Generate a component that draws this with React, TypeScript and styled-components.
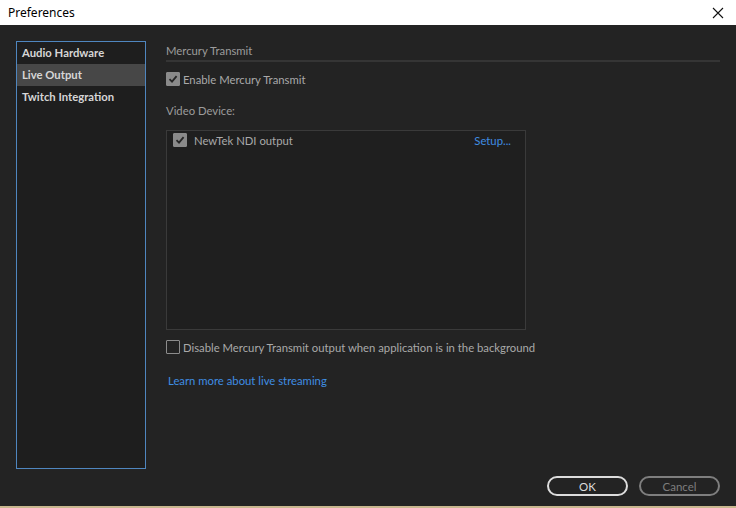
import styled, { createGlobalStyle } from "styled-components";

const GlobalStyle = createGlobalStyle`
  html, body {
    margin: 0;
    padding: 0;
    background: #232323;
  }
  body {
    font-family: Lato, "Noto Sans", sans-serif;
    font-size: 11.3px;
  }
`

const Window = styled.div`
  width: 736px;
  height: 508px;
  display: flex;
  flex-direction: column;
  background: #232323;
  box-sizing: border-box;
  border-bottom: 2px solid #c9b78f;
`
const TitleBar = styled.div`
  height: 25px;
  flex-shrink: 0;
  background: #ffffff;
  display: flex;
  align-items: center;
  justify-content: space-between;
  padding: 0 8px;
  color: #000;
  font-family: "Noto Sans", sans-serif;
  font-size: 12px;
  margin-top: -4px;
  padding-top: 4px;
`
const CloseButton = styled.div`
  width: 16px;
  height: 16px;
  display: flex;
  align-items: center;
  justify-content: center;
  margin-right: 2px;
`
const Body = styled.div`
  flex: 1;
  display: flex;
  flex-direction: column;
  padding: 16px 16px 0 16px;
`
const Main = styled.div`
  display: flex;
  gap: 20px;
  height: 428px;
`
const Sidebar = styled.div`
  width: 130px;
  box-sizing: border-box;
  border: 1px solid #4f86bf;
  background: #1e1e1e;
  padding-top: 0;
  display: flex;
  flex-direction: column;
`
const NavItem = styled.div<{ $active?: boolean }>`
  height: 22px;
  line-height: 21px;
  padding-left: 5px;
  color: #d6d6d6;
  font-weight: 700;
  font-size: 11.3px;
  background: ${p => (p.$active ? "#474747" : "transparent")};
`
const Content = styled.div`
  flex: 1;
  display: flex;
  flex-direction: column;
`
const SectionTitle = styled.div`
  color: #9c9c9c;
  line-height: 17px;
  padding-top: 1px;
  padding-bottom: 1px;
  border-bottom: 2px solid #353535;
`
const CheckRow = styled.label`
  display: flex;
  align-items: center;
  gap: 3px;
  color: #a9a9a9;
  height: 16px;
  line-height: 15px;
`
const Box = styled.span<{ $checked?: boolean }>`
  width: 14px;
  height: 14px;
  box-sizing: border-box;
  display: inline-flex;
  align-items: center;
  justify-content: center;
  border-radius: 1px;
  background: ${p => (p.$checked ? "#8a8a8a" : "transparent")};
  border: 1px solid ${p => (p.$checked ? "#8a8a8a" : "#8c8c8c")};
  flex-shrink: 0;
`
const FieldLabel = styled.div`
  color: #9c9c9c;
  line-height: 15px;
`
const Spacer = styled.div<{ $h: number }>`
  height: ${p => p.$h}px;
  flex-shrink: 0;
`
const DeviceList = styled.div`
  width: 360px;
  height: 200px;
  box-sizing: border-box;
  border: 1px solid #3a3a3a;
  background: #1f1f1f;
  padding: 1px 14px 0 6px;
`
const DeviceRow = styled.div`
  display: flex;
  align-items: center;
  justify-content: space-between;
  height: 16px;
  line-height: 15px;
`
const DeviceName = styled.span`
  display: flex;
  align-items: center;
  gap: 7px;
  color: #a9a9a9;
`
const Link = styled.a`
  color: #3f8de2;
  text-decoration: none;
  cursor: pointer;
`
const LinkRow = styled.div`
  padding-left: 2px;
  line-height: 15px;
`
const Footer = styled.div`
  display: flex;
  justify-content: flex-end;
  gap: 11px;
  padding-top: 7px;
`
const Button = styled.button<{ $primary?: boolean }>`
  width: 81px;
  height: 20px;
  box-sizing: border-box;
  border-radius: 10px;
  background: transparent;
  border: 2px solid ${p => (p.$primary ? "#dcdcdc" : "#7e7e7e")};
  color: ${p => (p.$primary ? "#dcdcdc" : "#7e7e7e")};
  font-family: Lato, "Noto Sans", sans-serif;
  font-size: 11.5px;
  padding: 0;
  line-height: 15px;
`

function Check({ checked }: { checked?: boolean }) {
    return (
        <Box $checked={checked}>
            {checked && (
                <svg width="10" height="10" viewBox="0 0 10 10">
                    <path d="M1.5 5.2 L4 7.6 L8.6 2.2" fill="none" stroke="#262626" strokeWidth="1.8" />
                </svg>
            )}
        </Box>
    )
}

export default function App() {
    return (
        <>
            <GlobalStyle />
            <Window>
                <TitleBar>
                    <span>Preferences</span>
                    <CloseButton>
                        <svg width="12" height="12" viewBox="0 0 12 12">
                            <path d="M1 1 L11 11 M11 1 L1 11" stroke="#111" strokeWidth="1.1" />
                        </svg>
                    </CloseButton>
                </TitleBar>
                <Body>
                    <Main>
                        <Sidebar>
                            <NavItem>Audio Hardware</NavItem>
                            <NavItem $active>Live Output</NavItem>
                            <NavItem>Twitch Integration</NavItem>
                        </Sidebar>
                        <Content>
                            <SectionTitle>Mercury Transmit</SectionTitle>
                            <Spacer $h={9} />
                            <CheckRow>
                                <Check checked />
                                Enable Mercury Transmit
                            </CheckRow>
                            <Spacer $h={16} />
                            <FieldLabel>Video Device:</FieldLabel>
                            <Spacer $h={12} />
                            <DeviceList>
                                <DeviceRow>
                                    <DeviceName>
                                        <Check checked />
                                        NewTek NDI output
                                    </DeviceName>
                                    <Link>Setup...</Link>
                                </DeviceRow>
                            </DeviceList>
                            <Spacer $h={9} />
                            <CheckRow>
                                <Check />
                                Disable Mercury Transmit output when application is in the background
                            </CheckRow>
                            <Spacer $h={18} />
                            <LinkRow>
                                <Link>Learn more about live streaming</Link>
                            </LinkRow>
                        </Content>
                    </Main>
                    <Footer>
                        <Button $primary>OK</Button>
                        <Button>Cancel</Button>
                    </Footer>
                </Body>
            </Window>
        </>
    )
}
